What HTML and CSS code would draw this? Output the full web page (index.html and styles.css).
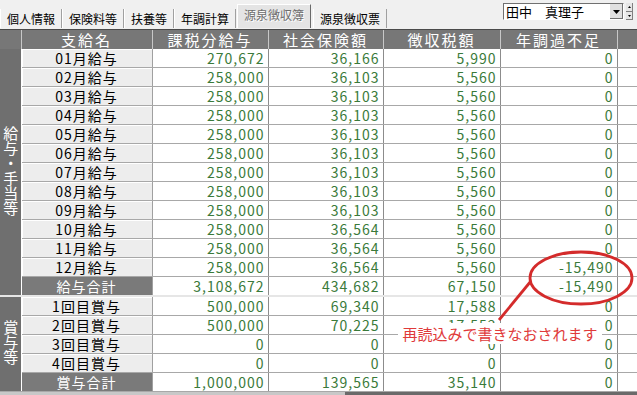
FILE: index.html
```html
<!DOCTYPE html>
<html lang="ja">

<head>
    <meta charset="UTF-8">
    <meta name="viewport" content="width=device-width, initial-scale=1.0">
    <title>源泉徴収簿</title>
    <link rel="stylesheet" href="styles.css">
</head>

<body>
    <div class="screen">
        <div class="topbar">
            <div class="tabs">
                <span class="tab">個人情報</span>
                <span class="tab">保険料等</span>
                <span class="tab">扶養等</span>
                <span class="tab">年調計算</span>
                <span class="tab active">源泉徴収簿</span>
                <span class="tab">源泉徴収票</span>
            </div>
            <div class="picker">
                <div class="select">
                    <span class="select-text">田中　真理子</span>
                    <span class="select-btn">
                        <svg width="7" height="4" viewBox="0 0 7 4"><path d="M0 0h7L3.5 4z" fill="#000"/></svg>
                    </span>
                </div>
                <div class="spin">
                    <span class="spin-btn"><svg width="3" height="2" viewBox="0 0 3 2"><path d="M1.5 0L3 2H0z" fill="#000"/></svg></span>
                    <span class="spin-btn"><svg width="3" height="2" viewBox="0 0 3 2"><path d="M0 0h3L1.5 2z" fill="#000"/></svg></span>
                </div>
            </div>
        </div>

        <table class="grid">
            <colgroup>
                <col style="width:21px">
                <col style="width:131px">
                <col style="width:116px">
                <col style="width:115px">
                <col style="width:117px">
                <col style="width:117px">
                <col style="width:20px">
            </colgroup>
            <thead>
                <tr>
                    <th></th>
                    <th>支給名</th>
                    <th>課税分給与</th>
                    <th>社会保険額</th>
                    <th>徴収税額</th>
                    <th>年調過不足</th>
                    <th></th>
                </tr>
            </thead>
            <tbody id="salaryRows"></tbody>
            <tbody id="bonusRows" class="bonus"></tbody>
        </table>
        <div class="hscroll"></div>

        <!-- 注記 -->
        <svg class="marks" width="637" height="395" viewBox="0 0 637 395">
            <ellipse cx="581" cy="278" rx="51" ry="26" fill="none" stroke="#d42b2b" stroke-width="2.8"/>
            <line x1="531" y1="281" x2="499" y2="320" stroke="#d42b2b" stroke-width="2.8"/>
        </svg>
        <div class="note">再読込みで書きなおされます</div>
    </div>

    <script>
        const salary = [
            ['01月給与', '270,672', '36,166', '5,990', '0'],
            ['02月給与', '258,000', '36,103', '5,560', '0'],
            ['03月給与', '258,000', '36,103', '5,560', '0'],
            ['04月給与', '258,000', '36,103', '5,560', '0'],
            ['05月給与', '258,000', '36,103', '5,560', '0'],
            ['06月給与', '258,000', '36,103', '5,560', '0'],
            ['07月給与', '258,000', '36,103', '5,560', '0'],
            ['08月給与', '258,000', '36,103', '5,560', '0'],
            ['09月給与', '258,000', '36,103', '5,560', '0'],
            ['10月給与', '258,000', '36,564', '5,560', '0'],
            ['11月給与', '258,000', '36,564', '5,560', '0'],
            ['12月給与', '258,000', '36,564', '5,560', '-15,490'],
            ['給与合計', '3,108,672', '434,682', '67,150', '-15,490', true]
        ];

        const bonus = [
            ['1回目賞与', '500,000', '69,340', '17,588', '0'],
            ['2回目賞与', '500,000', '70,225', '17,552', '0'],
            ['3回目賞与', '0', '0', '0', '0'],
            ['4回目賞与', '0', '0', '0', '0'],
            ['賞与合計', '1,000,000', '139,565', '35,140', '0', true]
        ];

        function llenar(id, filas, grupo) {
            const tbody = document.getElementById(id);
            filas.forEach((fila, index) => {
                const tr = document.createElement('tr');
                let html = '';
                if (index == 0) {
                    html += `<td class="group" rowspan="${filas.length}"><span class="vtext">${grupo}</span></td>`;
                }
                html += `<td class="name${fila[5] ? ' total' : ''}">${fila[0]}</td>`;
                for (let i = 1; i <= 4; i++) {
                    html += `<td class="num">${fila[i]}</td>`;
                }
                html += '<td class="pad"></td>';
                tr.innerHTML = html;
                tbody.appendChild(tr);
            });
        }

        llenar('salaryRows', salary, '給与・手当等');
        llenar('bonusRows', bonus, '賞与等');
    </script>
</body>

</html>
```

FILE: styles.css
```css
body {
    margin: 0;
    padding: 0;
    background-color: #f0f0f0;
    font-family: "Noto Sans CJK JP", sans-serif;
}

.screen {
    position: relative;
    width: 637px;
    height: 395px;
    overflow: hidden;
}

/* pestañas */
.topbar {
    display: flex;
    align-items: flex-end;
    height: 29px;
}

.tabs {
    display: flex;
    align-items: flex-end;
}

.tab {
    height: 19px;
    line-height: 19px;
    font-size: 12px;
    padding: 0 6px;
    color: #000;
    border-left: 1px solid #fff;
    border-right: 1px solid #a0a0a0;
    margin-bottom: 1px;
}

.tab.active {
    height: 23px;
    line-height: 20px;
    margin: 0 2px 1px 1px;
    background-color: #e4e4e4;
    border-top: 1px solid #fff;
    border-right: 1px solid #6a6a6a;
    color: #6e6e6e;
    text-shadow: 1px 1px 0 #fff;
}

.picker {
    display: flex;
    align-self: flex-start;
    margin: 3px 4px 0 auto;
    gap: 2px;
}

.select {
    display: flex;
    width: 119px;
    height: 15px;
    background-color: #fff;
    border: 1px solid;
    border-color: #707070 #fff #fff #707070;
}

.select-text {
    flex: 1;
    font-size: 13px;
    line-height: 15px;
    padding-left: 2px;
}

.select-btn {
    width: 13px;
    display: flex;
    align-items: center;
    justify-content: center;
    background-color: #e0e0e0;
    border-left: 1px solid #fff;
    box-shadow: inset -1px -1px 0 #707070;
}

.spin {
    display: flex;
    flex-direction: column;
    width: 7px;
    height: 17px;
}

.spin-btn {
    flex: 1;
    display: flex;
    align-items: center;
    justify-content: center;
    background-color: #e6e6e6;
    box-shadow: inset -1px -1px 0 #808080;
}

/* tabla */
.grid {
    border-collapse: collapse;
    table-layout: fixed;
    width: 637px;
}

.grid th {
    height: 19px;
    padding: 0;
    background-color: #777;
    color: #fff;
    font-weight: normal;
    font-size: 15px;
    line-height: 19px;
    letter-spacing: 2px;
    border-top: 1px solid #4a4a4a;
    border-left: 1px solid #c8c8c8;
}

.grid th:first-child {
    border-left: none;
}

.grid td {
    height: 18px;
    padding: 0;
    font-size: 14px;
    line-height: 18px;
    white-space: nowrap;
    border-bottom: 1px solid #a8a8a8;
}

.group {
    background-color: #6f6f6f;
    color: #fff;
    text-align: center;
    vertical-align: middle;
    border-right: 1px solid #fff;
}

.vtext {
    writing-mode: vertical-rl;
    text-orientation: upright;
    font-size: 15px;
    line-height: 20px;
}

.name {
    background-color: #ededed;
    color: #000;
    text-align: center;
    letter-spacing: 1px;
    border-right: 1px solid #a0a0a0;
    box-shadow: inset 1px 1px 0 #fff;
}

.name.total {
    background-color: #7a7a7a;
    color: #fff;
    box-shadow: none;
}

.num {
    background-color: #fff;
    color: #3a7a3a;
    text-align: right;
    letter-spacing: 1px;
    font-variant-numeric: tabular-nums;
    padding-right: 3px !important;
    border-right: 1px solid #8c8c8c;
}

.pad {
    background-color: #fff;
}

.bonus tr:first-child td {
    border-top: 2px solid #e6e6e6;
}

.hscroll {
    height: 3px;
    background: linear-gradient(to right, #c8c8c8 0, #c8c8c8 345px, #6a6a6a 345px);
}

/* anotación */
.marks {
    position: absolute;
    left: 0;
    top: 0;
    pointer-events: none;
}

.note {
    position: absolute;
    left: 398px;
    top: 323px;
    width: 204px;
    height: 21px;
    background-color: #fff;
    color: #e03a3a;
    font-size: 15px;
    line-height: 21px;
    text-align: center;
}
```
